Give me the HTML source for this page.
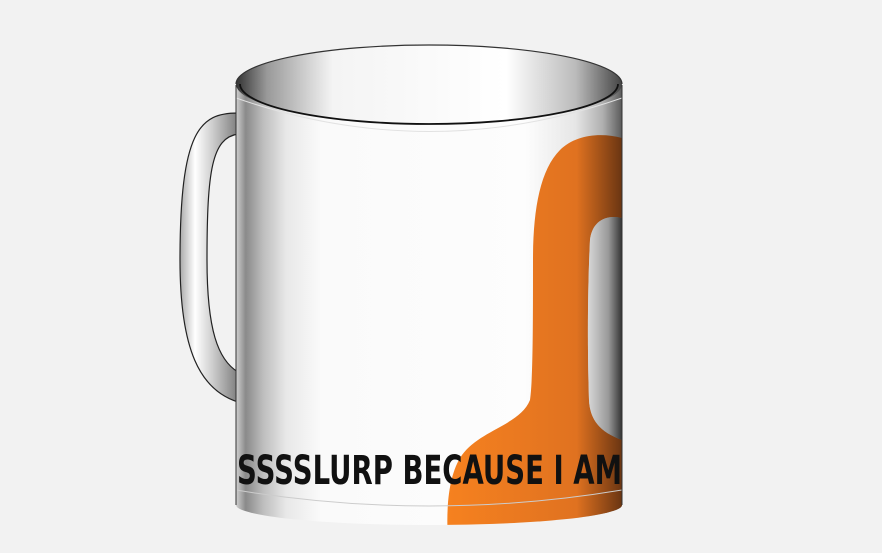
<!DOCTYPE html>
<html><head><style>
html,body{margin:0;padding:0;background:#f2f2f2;}
svg{display:block}
</style></head><body>
<svg width="882" height="553" viewBox="0 0 882 553" xmlns="http://www.w3.org/2000/svg">
<defs>
<linearGradient id="body" x1="236" x2="622" y1="0" y2="0" gradientUnits="userSpaceOnUse">
<stop offset="0" stop-color="#d0d0d0"/>
<stop offset="0.025" stop-color="#8a8a8a"/>
<stop offset="0.07" stop-color="#bdbdbd"/>
<stop offset="0.13" stop-color="#e8e8e8"/>
<stop offset="0.22" stop-color="#fafafa"/>
<stop offset="0.75" stop-color="#fdfdfd"/>
<stop offset="0.88" stop-color="#e6e6e6"/>
<stop offset="0.95" stop-color="#b0b0b0"/>
<stop offset="1" stop-color="#5a5a5a"/>
</linearGradient>
<linearGradient id="inner" x1="236" x2="622" y1="0" y2="0" gradientUnits="userSpaceOnUse">
<stop offset="0" stop-color="#333"/>
<stop offset="0.08" stop-color="#999"/>
<stop offset="0.25" stop-color="#f4f4f4"/>
<stop offset="0.7" stop-color="#fff"/>
<stop offset="0.88" stop-color="#bbb"/>
<stop offset="1" stop-color="#444"/>
</linearGradient>
<linearGradient id="handle" x1="180" x2="240" y1="0" y2="0" gradientUnits="userSpaceOnUse">
<stop offset="0" stop-color="#aaa"/>
<stop offset="0.25" stop-color="#fff"/>
<stop offset="0.55" stop-color="#ccc"/>
<stop offset="1" stop-color="#777"/>
</linearGradient>
<linearGradient id="or" x1="440" x2="622" y1="0" y2="0" gradientUnits="userSpaceOnUse">
<stop offset="0" stop-color="#f7821f"/>
<stop offset="0.75" stop-color="#e07220"/>
<stop offset="1" stop-color="#6a3512"/>
</linearGradient>
<linearGradient id="gr" x1="588" x2="622" y1="0" y2="0" gradientUnits="userSpaceOnUse">
<stop offset="0" stop-color="#d8d8d8"/>
<stop offset="0.6" stop-color="#999"/>
<stop offset="1" stop-color="#333"/>
</linearGradient>
<clipPath id="bc"><path d="M236 85 L236 505 A193 20 0 0 0 622 505 L622 85 Z"/></clipPath>
</defs>
<!-- handle -->
<path d="M238 113 C200 113 180 130 180 260 C180 350 200 390 238 402 L238 372 C218 360 207 330 207 260 C207 170 212 138 238 134 Z" fill="url(#handle)" stroke="#222" stroke-width="1.2"/>
<!-- body -->
<path d="M236 85 L236 505 A193 20 0 0 0 622 505 L622 85 Z" fill="url(#body)"/>
<g clip-path="url(#bc)">
<path d="M622 138 C600 132 575 135 560 150 C540 170 533 210 533 260 C533 320 533 380 530 400 C520 425 480 430 462 455 C448 475 446 510 448 540 L622 540 L622 440 C600 432 590 420 589 400 C587 340 588 280 590 240 C592 222 605 214 622 218 Z" fill="url(#or)"/>
<path d="M622 218 C605 214 592 222 590 240 C588 280 587 340 589 400 C590 420 600 432 622 440 Z" fill="url(#gr)"/>
<path d="M236 490 Q430 522 622 490" stroke="#ccc" fill="none" stroke-width="1"/>
<path d="M236 98 Q429 165 622 98" stroke="#e2e2e2" fill="none" stroke-width="1"/>
</g>
<!-- top rim -->
<ellipse cx="429" cy="84" rx="193" ry="39" fill="url(#inner)"/>
<path d="M236 84 A193 39 0 0 1 622 84" fill="none" stroke="#333" stroke-width="1.2"/>
<path d="M240 84 A189 40 0 0 0 618 84" fill="none" stroke="#111" stroke-width="1.8"/>
<path d="M236 85 L236 505" stroke="#333" stroke-width="1"/>
<path d="M622 85 L622 505" stroke="#333" stroke-width="1"/>
<text x="237" y="484" font-family="DejaVu Sans, Liberation Sans, sans-serif" font-weight="bold" font-size="40" fill="#111" textLength="385" lengthAdjust="spacingAndGlyphs">SSSSLURP BECAUSE I AM</text>
</svg>
</body></html>
